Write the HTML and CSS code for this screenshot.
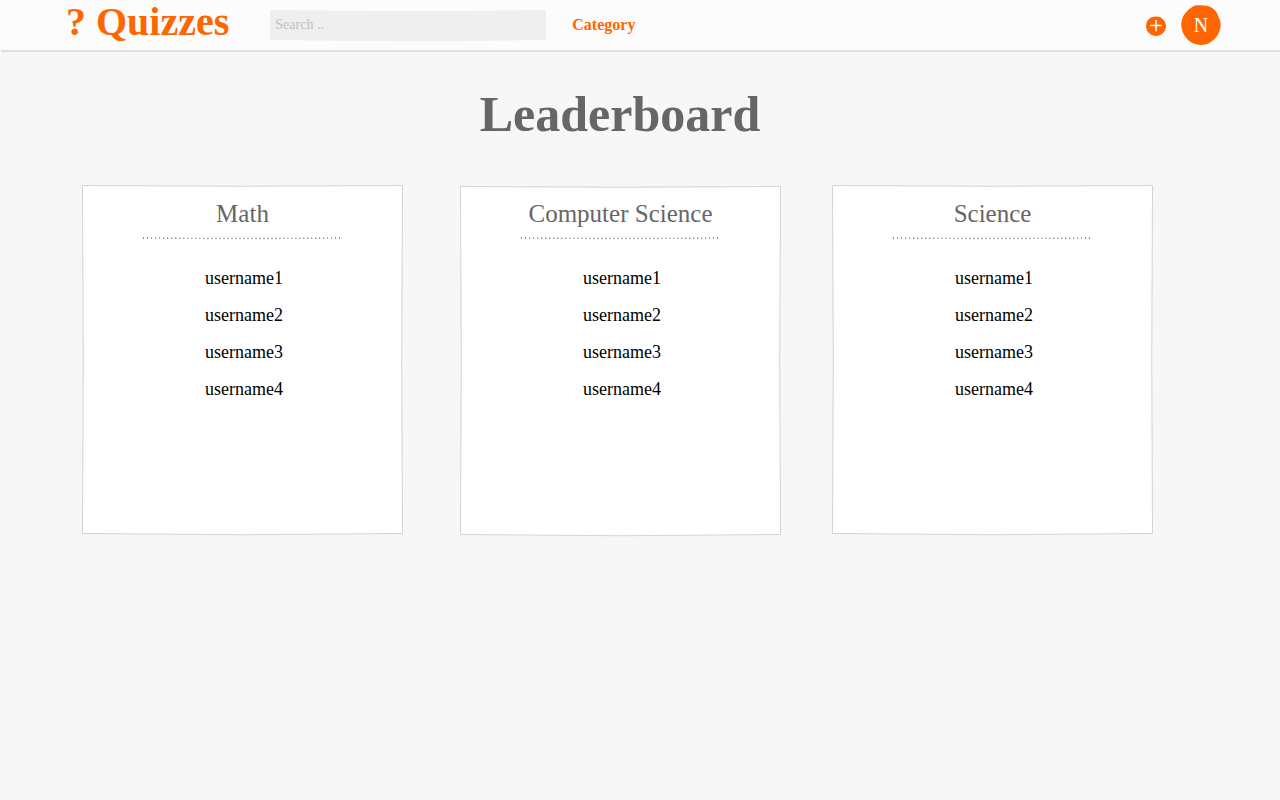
FILE: index.html
```html
<!DOCTYPE html>
<html lang="en">
<head>
<meta charset="utf-8">
<meta name="viewport" content="width=device-width, initial-scale=1">
<title>Quizzes - Leaderboard</title>
<link rel="stylesheet" href="styles.css">
</head>
<body>
<header class="topbar">
  <a class="logo" href="#">? Quizzes</a>
  <form class="search" role="search">
    <svg class="backdrop" viewBox="0 0 276 30" preserveAspectRatio="none" aria-hidden="true"><path class="search-fill" d="M0 0Q138 2 276 0V30Q138 32 0 30Z"/></svg>
    <input class="search-input" type="search" placeholder="Search .." aria-label="Search">
  </form>
  <nav class="nav"><a class="nav-link" href="#">Category</a></nav>
  <div class="actions">
    <button class="add" type="button" aria-label="Add quiz">
      <svg class="add-icon" viewBox="0 0 20 20" aria-hidden="true"><path class="blob" d="M5 1.500C8 .2 12 0 14.500 1.300C17 3 20 6 20 10C20 15 15.500 20 10 20C4.500 20 0 15.500 0 10C0 6 2 3 5 1.500Z"/><path class="plus" d="M4 9.500H16M10 4V15.500"/></svg>
    </button>
    <button class="avatar" type="button" aria-label="N, account">
      <svg class="backdrop" viewBox="0 0 40 40" aria-hidden="true"><path class="blob" d="M12 1.500C14 0 17 .1 20 .3C24 .6 28 .8 30.500 2.500C34 4.500 36.500 8 37.500 12C39 14.500 40 18 39.700 21C39.300 25 37.500 29 35 32.500C31 37 26 40 20 40C13 39.800 7 36.500 3.500 30.500C.8 26 -.5 20 .8 15C2.500 9 7 4.500 12 1.500Z"/></svg>
      <span class="initial">N</span>
    </button>
  </div>
  <svg class="rule" viewBox="0 0 1280 3" preserveAspectRatio="none" aria-hidden="true"><path class="rule-line" d="M1 1Q640 2 1280 1"/></svg>
</header>
<main>
  <h1 class="title">Leaderboard</h1>
  <div class="boards">
    <section class="card">
      <svg class="backdrop" viewBox="0 0 321 350" preserveAspectRatio="none" aria-hidden="true"><path class="paper" d="M.5 .5Q160 2 320.500 .5Q319 175 320.500 348.500Q160 351 .5 348.500Q2 175 .5 .5Z"/></svg>
      <h2 class="subject">Math</h2>
      <svg class="dots" viewBox="0 0 200 3" aria-hidden="true"><path class="dots-line" d="M0 1Q100 2 198 1"/></svg>
      <ol class="users"><li>username1</li><li>username2</li><li>username3</li><li>username4</li></ol>
    </section>
    <section class="card card-middle">
      <svg class="backdrop" viewBox="0 0 321 350" preserveAspectRatio="none" aria-hidden="true"><path class="paper" d="M.5 1.500Q160 3 320.500 1.500Q319 175 320.500 349.500Q160 352 .5 349.500Q2 175 .5 1.500Z"/></svg>
      <h2 class="subject">Computer Science</h2>
      <svg class="dots" viewBox="0 0 200 3" aria-hidden="true"><path class="dots-line" d="M0 1Q100 2 198 1"/></svg>
      <ol class="users"><li>username1</li><li>username2</li><li>username3</li><li>username4</li></ol>
    </section>
    <section class="card">
      <svg class="backdrop" viewBox="0 0 321 350" preserveAspectRatio="none" aria-hidden="true"><path class="paper" d="M.5 .5Q160 2 320.500 .5Q319 175 320.500 348.500Q160 351 .5 348.500Q2 175 .5 .5Z"/></svg>
      <h2 class="subject">Science</h2>
      <svg class="dots" viewBox="0 0 200 3" aria-hidden="true"><path class="dots-line" d="M0 1Q100 2 198 1"/></svg>
      <ol class="users"><li>username1</li><li>username2</li><li>username3</li><li>username4</li></ol>
    </section>
  </div>
</main>
</body>
</html>
```

FILE: styles.css
```css
* {
  box-sizing: border-box;
}

body {
  margin: 0;
  background: #f7f7f7;
  color: #000;
  font-family: "Liberation Serif", "Times New Roman", serif;
}

button,
input {
  font-family: inherit;
}

.backdrop {
  position: absolute;
  inset: 0;
  width: 100%;
  height: 100%;
  overflow: visible;
}

.topbar {
  position: relative;
  display: flex;
  align-items: center;
  padding: 0 59px 0 66px;
  border-bottom: 1px solid #fcfcfc;
  background: #fcfcfc;
}

.rule {
  position: absolute;
  left: 0;
  bottom: -3px;
  width: 100%;
  height: 3px;
}

.rule-line {
  fill: none;
  stroke: #d6d6d6;
  stroke-width: 1.4;
}

.logo {
  padding-bottom: 6px;
  color: #ff6600;
  font-size: 40px;
  font-weight: bold;
  line-height: 44px;
  text-decoration: none;
}

.search {
  position: relative;
  width: 276px;
  margin-left: 41px;
}

.search-fill {
  fill: #efefef;
}

.search-input {
  position: relative;
  display: block;
  width: 100%;
  height: 30px;
  padding: 0 5px;
  border: 0;
  background: transparent;
  font-size: 14px;
  appearance: none;
}

.search-input::placeholder {
  color: #c0c0c0;
}

.nav {
  margin-left: 26px;
}

.nav-link {
  color: #ff6600;
  font-size: 16px;
  font-weight: bold;
  line-height: 18px;
  text-decoration: none;
}

.actions {
  display: flex;
  align-items: center;
  gap: 15px;
  margin-left: auto;
}

.add,
.avatar {
  position: relative;
  padding: 0;
  border: 0;
  background: none;
}

.add,
.add-icon {
  display: block;
  width: 20px;
  height: 20px;
}

.add {
  margin-top: 1px;
}

.add-icon {
  overflow: visible;
}

.avatar {
  width: 40px;
  height: 40px;
  color: #fff;
  font-size: 20px;
}

.initial {
  position: relative;
}

.blob {
  fill: #ff6600;
}

.plus {
  fill: none;
  stroke: #fff;
  stroke-width: 1.5;
}

.title {
  margin: 0;
  padding: 35px 40px 43px 0;
  color: #666;
  font-size: 50px;
  line-height: 56px;
  text-align: center;
}

.boards {
  display: flex;
  padding: 0 127px 40px 82px;
}

.card {
  position: relative;
  display: flex;
  flex: 1;
  flex-direction: column;
  align-items: center;
  min-height: 350px;
  padding-top: 15px;
}

.card-middle {
  margin: 0 51px 0 57px;
}

.paper {
  fill: #fff;
  stroke: #d3d3d3;
  stroke-width: 1;
}

.subject {
  position: relative;
  margin: 0;
  color: #666;
  font-size: 25px;
  font-weight: normal;
  line-height: 28px;
}

.dots {
  position: relative;
  width: 200px;
  height: 3px;
  margin-top: 9px;
}

.dots-line {
  fill: none;
  stroke: #666;
  stroke-width: 1.4;
  stroke-dasharray: 1 3;
}

.users {
  position: relative;
  display: flex;
  flex-direction: column;
  gap: 17px;
  margin: 28px 0 0;
  padding: 0 0 0 3px;
  font-size: 18px;
  line-height: 20px;
  list-style: none;
}
```
